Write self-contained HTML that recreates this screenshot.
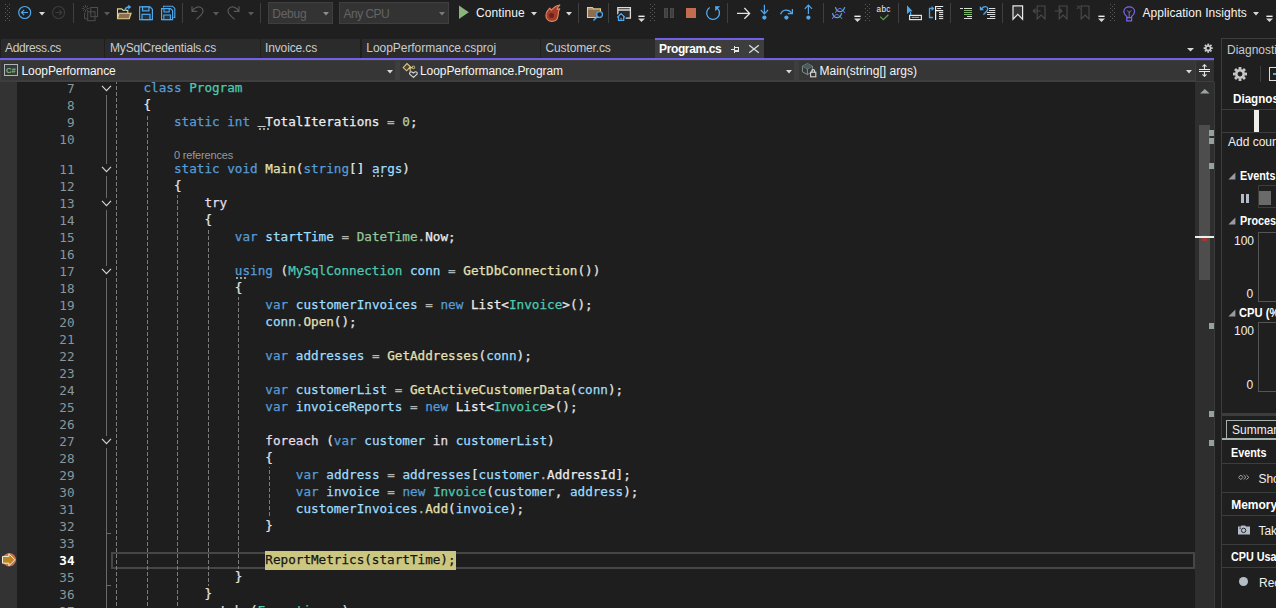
<!DOCTYPE html>
<html><head><meta charset="utf-8"><title>LoopPerformance - Program.cs</title>
<style>
html,body{margin:0;padding:0}
body{width:1276px;height:608px;overflow:hidden;background:#1f1f1f;position:relative;font-family:"Liberation Sans",sans-serif;font-size:12px;color:#e6e6e6}
i{font-style:normal}
.tt{position:absolute;white-space:pre;line-height:16px;color:#f4f4f4}
.combo{position:absolute;top:2px;height:22px;box-sizing:border-box;background:#333;border:1px solid #3f3f3f}
.combo span{position:absolute;top:2.5px;line-height:16px;color:#646464;white-space:pre}
.tab{position:absolute;top:39px;height:19px;background:#2b2b2b}
.tab span{position:absolute;top:0.5px;line-height:16px;color:#c8cdd0;white-space:pre}
.atab{position:absolute;left:655px;top:38px;width:109px;height:20px;background:#3d3d3d;border-top:2px solid #7160e8;box-sizing:border-box}
.atab span{position:absolute;left:4px;top:0.5px;line-height:16px;font-weight:700;color:#fff;white-space:pre}
#code{position:absolute;left:0;top:82px;width:1195px;height:526px;overflow:hidden;background:#1e1e1e}
.g{position:absolute;width:1px;background-image:linear-gradient(#7c7c7c 0 4px,transparent 4px 6px);background-size:1px 6px}
.ln{position:absolute;left:29px;width:45.5px;text-align:right;font:12.65px/17px "DejaVu Sans Mono","Liberation Mono",monospace;color:#87989e;white-space:pre}
.ln.cur{color:#fff;font-weight:700}
.cl{position:absolute;white-space:pre;font:12.65px/17px "DejaVu Sans Mono","Liberation Mono",monospace;color:#e4e4e4;height:17px;-webkit-text-stroke:0.25px}
.k{color:#569cd6}.t{color:#4ec9b0}.l{color:#9cdcfe}.m{color:#e4e0b4}.s{color:#92c89a}.o{color:#b4b4b4}.n{color:#b5cea8}.c{color:#e6dcea}.f{color:#ececec}
.h{color:#161616}.u{position:relative;top:-2px;color:#ececec}
#rp{position:absolute;left:1221px;top:38px;width:55px;height:570px;overflow:hidden;border-left:1px solid #3d3d3d;border-top:1px solid #3d3d3d;box-sizing:border-box;background:#1f1f1f}
#rp>*{margin-left:-1px;margin-top:-1px}
.rt{position:absolute;white-space:pre;line-height:14px}
</style></head>
<body>
<svg style="position:absolute;left:5px;top:4px" width="6" height="18" viewBox="0 0 6 18" ><g fill="#5a5a5a"><rect x="0" y="0" width="1" height="1"/><rect x="4" y="0" width="1" height="1"/><rect x="2" y="2" width="1" height="1"/><rect x="0" y="4" width="1" height="1"/><rect x="4" y="4" width="1" height="1"/><rect x="2" y="6" width="1" height="1"/><rect x="0" y="8" width="1" height="1"/><rect x="4" y="8" width="1" height="1"/><rect x="2" y="10" width="1" height="1"/><rect x="0" y="12" width="1" height="1"/><rect x="4" y="12" width="1" height="1"/><rect x="2" y="14" width="1" height="1"/><rect x="0" y="16" width="1" height="1"/><rect x="4" y="16" width="1" height="1"/></g></svg>
<svg style="position:absolute;left:17px;top:5px" width="16" height="16" viewBox="0 0 16 16" ><circle cx="7.7" cy="7.5" r="6" fill="none" stroke="#4ea8ee" stroke-width="1.2"/><path d="M11 7.5H4.6M7.2 4.8L4.5 7.5L7.2 10.2" fill="none" stroke="#4ea8ee" stroke-width="1.2"/></svg>
<svg style="position:absolute;left:39px;top:12px" width="7" height="4.5" viewBox="0 0 7 4.5" ><path d="M0 0H6L3.0 3.5Z" fill="#d8d8d8"/></svg>
<svg style="position:absolute;left:51px;top:5px" width="16" height="16" viewBox="0 0 16 16" ><circle cx="7.6" cy="7.5" r="6" fill="none" stroke="#3c3c3c" stroke-width="1.1"/><path d="M4.4 7.5H10.8M8.2 4.8L10.9 7.5L8.2 10.2" fill="none" stroke="#3c3c3c" stroke-width="1.1"/></svg>
<div style="position:absolute;left:73px;top:3px;width:1px;height:20px;background:#3f3f3f"></div>
<svg style="position:absolute;left:81px;top:4px" width="18" height="18" viewBox="0 0 18 18" ><g fill="none" stroke="#4e4e4e" stroke-width="1"><rect x="9.8" y="3.5" width="6.7" height="9.2"/><rect x="6.7" y="7.8" width="7.3" height="8.9"/><path d="M3.6 8.7V14.8H6.5"/><g stroke-width="0.9"><path d="M0 -1.3V-3.6" transform="translate(4.5 4.5) rotate(0)"/><path d="M0 -1.3V-3.6" transform="translate(4.5 4.5) rotate(45)"/><path d="M0 -1.3V-3.6" transform="translate(4.5 4.5) rotate(90)"/><path d="M0 -1.3V-3.6" transform="translate(4.5 4.5) rotate(135)"/><path d="M0 -1.3V-3.6" transform="translate(4.5 4.5) rotate(180)"/><path d="M0 -1.3V-3.6" transform="translate(4.5 4.5) rotate(225)"/><path d="M0 -1.3V-3.6" transform="translate(4.5 4.5) rotate(270)"/><path d="M0 -1.3V-3.6" transform="translate(4.5 4.5) rotate(315)"/></g></g></svg>
<svg style="position:absolute;left:104px;top:12px" width="7" height="4.5" viewBox="0 0 7 4.5" ><path d="M0 0H6L3.0 3.5Z" fill="#5a5a5a"/></svg>
<svg style="position:absolute;left:116px;top:4px" width="17" height="17" viewBox="0 0 17 17" ><path d="M1.5 14.6V4.9H5.7L7.2 6.4H11.8V9" fill="none" stroke="#e6d28c" stroke-width="1.1"/><path d="M1.5 14.8L3 9.2H15.1L13.2 14.8Z" fill="#8e6e52" stroke="#e6d28c" stroke-width="1.1"/><path d="M9.1 6.9C9.1 4.4 10.6 3.1 13 3.1" fill="none" stroke="#4ea8ee" stroke-width="1.5"/><path d="M12.2 0.7L15.3 3.1L12.2 5.6Z" fill="#4ea8ee"/></svg>
<svg style="position:absolute;left:138px;top:5px" width="16" height="16" viewBox="0 0 16 16" ><path d="M1.6 1.9H12L14.4 4.3V14.6H1.6Z" fill="none" stroke="#4ea8ee" stroke-width="1.2"/><rect x="4.5" y="1.9" width="6.5" height="4" fill="#22323f" stroke="#4ea8ee" stroke-width="1.2"/><rect x="4" y="9.3" width="8" height="5.3" fill="#22323f" stroke="#4ea8ee" stroke-width="1.2"/></svg>
<svg style="position:absolute;left:160px;top:5px" width="16" height="16" viewBox="0 0 16 16" ><path d="M3.5 2.5V1.2H12.6L14.8 3.4V12.5H13.4" fill="none" stroke="#4ea8ee" stroke-width="1.1"/><path d="M1.6 3.6H10.6L12.6 5.6V14.6H1.6Z" fill="none" stroke="#4ea8ee" stroke-width="1.2"/><rect x="4" y="3.6" width="5.2" height="3.4" fill="#22323f" stroke="#4ea8ee" stroke-width="1.1"/><rect x="3.8" y="10" width="6.6" height="4.6" fill="#22323f" stroke="#4ea8ee" stroke-width="1.1"/></svg>
<div style="position:absolute;left:182px;top:3px;width:1px;height:20px;background:#3f3f3f"></div>
<svg style="position:absolute;left:190px;top:4px" width="16" height="17" viewBox="0 0 16 17" ><path d="M2 2.2V7.4H7.2M2.2 7.2C4 3.4 9 1.4 12 4.4C14.6 7.2 12.4 10 6.4 15.4" fill="none" stroke="#5a5a5a" stroke-width="1.1"/></svg>
<svg style="position:absolute;left:213px;top:12px" width="7" height="4.5" viewBox="0 0 7 4.5" ><path d="M0 0H6L3.0 3.5Z" fill="#5a5a5a"/></svg>
<svg style="position:absolute;left:226px;top:4px" width="16" height="17" viewBox="0 0 16 17" ><path d="M13 2.2V7.4H7.8M12.8 7.2C11 3.4 6 1.4 3 4.4C0.4 7.2 2.6 10 8.6 15.4" fill="none" stroke="#5a5a5a" stroke-width="1.1"/></svg>
<svg style="position:absolute;left:248px;top:12px" width="7" height="4.5" viewBox="0 0 7 4.5" ><path d="M0 0H6L3.0 3.5Z" fill="#5a5a5a"/></svg>
<div style="position:absolute;left:260px;top:3px;width:1px;height:20px;background:#3f3f3f"></div>
<div class="combo" style="left:268px;width:65px"><span style="left:3.3px;letter-spacing:-0.27px">Debug</span></div>
<svg style="position:absolute;left:323px;top:12px" width="7" height="4.5" viewBox="0 0 7 4.5" ><path d="M0 0H6L3.0 3.5Z" fill="#8e8e8e"/></svg>
<div class="combo" style="left:339px;width:110px"><span style="left:3.6px;letter-spacing:-0.55px">Any CPU</span></div>
<svg style="position:absolute;left:439px;top:12px" width="7" height="4.5" viewBox="0 0 7 4.5" ><path d="M0 0H6L3.0 3.5Z" fill="#7a7a7a"/></svg>
<svg style="position:absolute;left:458px;top:5px" width="12" height="15" viewBox="0 0 12 15" ><path d="M1 0.6L10.8 7.3L1 14Z" fill="#8ab47c"/></svg>
<div class="tt" style="left:476px;top:5px;letter-spacing:0.09px">Continue</div>
<svg style="position:absolute;left:531px;top:12px" width="7" height="4.5" viewBox="0 0 7 4.5" ><path d="M0 0H6L3.0 3.5Z" fill="#d8d8d8"/></svg>
<svg style="position:absolute;left:545px;top:4px" width="16" height="19" viewBox="0 0 16 19" ><path d="M6.8 17.4C3.4 17.4 0.9 14.8 0.9 11.6C0.9 9 2 7 3.4 5.6L4.8 4.1L6.3 6.1C7.5 5 9 3.4 11 2.2C12.4 1.4 13.6 1.1 14.9 1C13.6 2 12.6 3.4 12.2 5.5L14.8 4.7C13.8 6.2 13.4 7.4 13.3 9C13.4 10 13.2 11 13 12C12.6 15 10.2 17.4 6.8 17.4Z" fill="#a03c2a" stroke="#e08a68" stroke-width="1.1" stroke-linejoin="round"/><circle cx="6.6" cy="11.5" r="2.5" fill="#6e2218"/></svg>
<svg style="position:absolute;left:566px;top:12px" width="7" height="4.5" viewBox="0 0 7 4.5" ><path d="M0 0H6L3.0 3.5Z" fill="#d8d8d8"/></svg>
<div style="position:absolute;left:578px;top:3px;width:1px;height:20px;background:#3f3f3f"></div>
<svg style="position:absolute;left:586px;top:6px" width="17" height="16" viewBox="0 0 17 16" ><path d="M1.5 1.5H6.4l1.2 1.4H14.5V11.5H1.5Z" fill="#8e6e52" stroke="#e0cc90" stroke-width="1.1"/><path d="M1.5 3H7.5" stroke="#e0cc90" stroke-width="0.8"/><circle cx="13.6" cy="8.5" r="2.9" fill="#1f1f1f" stroke="#4ea8ee" stroke-width="1.3"/><path d="M11.6 10.6L7.4 14.6" stroke="#4ea8ee" stroke-width="1.4"/></svg>
<div style="position:absolute;left:608px;top:3px;width:1px;height:20px;background:#3f3f3f"></div>
<svg style="position:absolute;left:616px;top:6px" width="16" height="16" viewBox="0 0 16 16" ><rect x="1.7" y="1.5" width="12.8" height="10.8" fill="#2a2a2a"/><path d="M1.8 8.4V1.6H14.4V12.2H9.6M1.8 4H14.4" fill="none" stroke="#dcdcdc" stroke-width="1.3"/><path d="M0.8 11.6L5.1 7.4L9.4 11.6" fill="#1f1f1f" stroke="#1f1f1f" stroke-width="3"/><path d="M2.5 11V14.5H7.7V11Z" fill="#1f1f1f" stroke="#1f1f1f" stroke-width="2.4"/><path d="M1.2 11.4L5.1 7.7L9 11.4M2.5 10.6V14.4H7.7V10.6" fill="none" stroke="#4ea8ee" stroke-width="1.3"/><rect x="4.4" y="12" width="1.4" height="1.6" fill="#4ea8ee"/></svg>
<svg style="position:absolute;left:638px;top:15.4px" width="8" height="8" viewBox="0 0 8 8" ><rect x="0.4" y="0.6" width="6.2" height="1.4" fill="#f0f0f0"/><path d="M0 3.4H7L3.5 6.9Z" fill="#d8d8d8"/></svg>
<svg style="position:absolute;left:650px;top:4px" width="6" height="18" viewBox="0 0 6 18" ><g fill="#5a5a5a"><rect x="0" y="0" width="1" height="1"/><rect x="4" y="0" width="1" height="1"/><rect x="2" y="2" width="1" height="1"/><rect x="0" y="4" width="1" height="1"/><rect x="4" y="4" width="1" height="1"/><rect x="2" y="6" width="1" height="1"/><rect x="0" y="8" width="1" height="1"/><rect x="4" y="8" width="1" height="1"/><rect x="2" y="10" width="1" height="1"/><rect x="0" y="12" width="1" height="1"/><rect x="4" y="12" width="1" height="1"/><rect x="2" y="14" width="1" height="1"/><rect x="0" y="16" width="1" height="1"/><rect x="4" y="16" width="1" height="1"/></g></svg>
<div style="position:absolute;left:664px;top:8px;width:4px;height:10px;background:#3f3f3f;border:1px solid #4a4a4a;box-sizing:border-box"></div><div style="position:absolute;left:670px;top:8px;width:4px;height:10px;background:#3f3f3f;border:1px solid #4a4a4a;box-sizing:border-box"></div>
<div style="position:absolute;left:686px;top:8px;width:10px;height:10px;background:#c46c50"></div>
<svg style="position:absolute;left:705px;top:4px" width="17" height="17" viewBox="0 0 17 17" ><path d="M4.8 3.5A6.4 6.4 0 1 0 13.7 5.9L10.6 2.8" fill="none" stroke="#4ea8ee" stroke-width="1.3"/><path d="M10.2 7.2V2.3H15.2Z" fill="#4ea8ee"/></svg>
<div style="position:absolute;left:727px;top:3px;width:1px;height:20px;background:#3f3f3f"></div>
<svg style="position:absolute;left:736px;top:7px" width="15" height="13" viewBox="0 0 15 13" ><path d="M1 6.4H13.4M8.4 1L13.6 6.4L8.4 11.8" fill="none" stroke="#e4e4e4" stroke-width="1.3"/></svg>
<svg style="position:absolute;left:759px;top:4px" width="11" height="18" viewBox="0 0 11 18" ><path d="M5.4 0.8V9.6M1.8 6L5.4 9.8L9 6" fill="none" stroke="#4ea8ee" stroke-width="1.2"/><circle cx="5.4" cy="13.6" r="2.1" fill="#4ea8ee"/></svg>
<svg style="position:absolute;left:779px;top:5px" width="16" height="16" viewBox="0 0 16 16" ><path d="M1.6 9.2C3.4 4.2 9.6 3.6 12.6 8" fill="none" stroke="#4ea8ee" stroke-width="1.3"/><path d="M13.4 4V8.6H8.8" fill="none" stroke="#4ea8ee" stroke-width="1.3"/><circle cx="7.4" cy="12.6" r="2.1" fill="#4ea8ee"/></svg>
<svg style="position:absolute;left:803px;top:4px" width="11" height="18" viewBox="0 0 11 18" ><path d="M5.4 10V1.2M1.8 4.8L5.4 1L9 4.8" fill="none" stroke="#4ea8ee" stroke-width="1.2"/><circle cx="5.4" cy="13.6" r="2.1" fill="#4ea8ee"/></svg>
<div style="position:absolute;left:823px;top:3px;width:1px;height:20px;background:#3f3f3f"></div>
<svg style="position:absolute;left:830px;top:5px" width="17" height="16" viewBox="0 0 17 16" ><path d="M11.0 3.5L14.5 7.300000000000001" fill="none" stroke="#8a8a8a" stroke-width="0.9"/><path d="M5.4 2.1C6.9 8.1 13.2 8.1 14.700000000000001 2.1" fill="none" stroke="#4ea8ee" stroke-width="1.3"/><path d="M5.5 7.300000000000001L8.9 3.5" fill="none" stroke="#9a948c" stroke-width="0.9"/><path d="M8.8 3.5H11.100000000000001" stroke="#7a5fe0" stroke-width="1.1"/><rect x="5.0" y="6.800000000000001" width="1.1" height="1.2" fill="#7a5fe0"/><rect x="14.0" y="6.800000000000001" width="1.1" height="1.2" fill="#7a5fe0"/><path d="M8.0 9.5L11.5 13.3" fill="none" stroke="#8a8a8a" stroke-width="0.9"/><path d="M2.4 8.1C3.9 14.1 10.2 14.1 11.700000000000001 8.1" fill="none" stroke="#4ea8ee" stroke-width="1.3"/><path d="M2.5 13.3L5.9 9.5" fill="none" stroke="#9a948c" stroke-width="0.9"/><path d="M5.8 9.5H8.1" stroke="#7a5fe0" stroke-width="1.1"/><rect x="2.0" y="12.8" width="1.1" height="1.2" fill="#7a5fe0"/><rect x="11.0" y="12.8" width="1.1" height="1.2" fill="#7a5fe0"/></svg>
<svg style="position:absolute;left:854px;top:15.4px" width="8" height="8" viewBox="0 0 8 8" ><rect x="0.4" y="0.6" width="6.2" height="1.4" fill="#f0f0f0"/><path d="M0 3.4H7L3.5 6.9Z" fill="#d8d8d8"/></svg>
<svg style="position:absolute;left:865px;top:4px" width="6" height="18" viewBox="0 0 6 18" ><g fill="#5a5a5a"><rect x="0" y="0" width="1" height="1"/><rect x="4" y="0" width="1" height="1"/><rect x="2" y="2" width="1" height="1"/><rect x="0" y="4" width="1" height="1"/><rect x="4" y="4" width="1" height="1"/><rect x="2" y="6" width="1" height="1"/><rect x="0" y="8" width="1" height="1"/><rect x="4" y="8" width="1" height="1"/><rect x="2" y="10" width="1" height="1"/><rect x="0" y="12" width="1" height="1"/><rect x="4" y="12" width="1" height="1"/><rect x="2" y="14" width="1" height="1"/><rect x="0" y="16" width="1" height="1"/><rect x="4" y="16" width="1" height="1"/></g></svg>
<div style="position:absolute;left:876.6px;top:4.5px;font:400 8.2px/10px 'Liberation Sans',sans-serif;color:#f0f0f0;letter-spacing:0.3px">abc</div>
<svg style="position:absolute;left:879px;top:14px" width="11" height="7" viewBox="0 0 11 7" ><path d="M1.2 2.6L4.3 5.6L9.4 0.8" fill="none" stroke="#5f9d4c" stroke-width="1.3"/></svg>
<div style="position:absolute;left:898px;top:3px;width:1px;height:20px;background:#3f3f3f"></div>
<svg style="position:absolute;left:906px;top:4px" width="17" height="17" viewBox="0 0 17 17" ><path d="M1 1.2L6.6 7.2L4 7.6L1 10Z" fill="#4ea8ee"/><path d="M4.6 8V12" stroke="#4ea8ee" stroke-width="1.2"/><rect x="3.6" y="11.4" width="11.8" height="4.2" fill="none" stroke="#e4e4e4" stroke-width="1.2"/><rect x="5.6" y="12.8" width="7.6" height="1.2" fill="#9a9a9a"/></svg>
<svg style="position:absolute;left:928px;top:5px" width="16" height="16" viewBox="0 0 16 16" ><path d="M4.2 3.4H1.5V12.5H4.9" fill="none" stroke="#4ea8ee" stroke-width="1.3"/><path d="M3.6 0.9L6.3 3.4L3.6 5.9Z" fill="#4ea8ee"/><path d="M7.6 15V1.5H15.2M7.6 5.6H15.2" fill="none" stroke="#ececec" stroke-width="1.2"/><rect x="9.2" y="3" width="4" height="1" fill="#d8d8d8"/><g fill="#ececec"><rect x="11" y="7.1" width="4.2" height="1"/><rect x="11" y="9.1" width="4.2" height="1"/><rect x="11" y="11.1" width="4.2" height="1"/><rect x="11" y="13.1" width="4.2" height="1"/></g></svg>
<div style="position:absolute;left:950px;top:3px;width:1px;height:20px;background:#3f3f3f"></div>
<svg style="position:absolute;left:959px;top:7px" width="14" height="13" viewBox="0 0 14 13" ><rect x="1" y="1" width="3" height="1" fill="#dcdcdc"/><rect x="5" y="1" width="8" height="1" fill="#dcdcdc"/><rect x="5" y="3" width="8" height="1" fill="#7eb86a"/><rect x="5" y="5" width="8" height="1" fill="#7eb86a"/><rect x="5" y="7" width="8" height="1" fill="#7eb86a"/><rect x="8" y="9" width="5" height="1" fill="#dcdcdc"/><rect x="5" y="11" width="8" height="1" fill="#dcdcdc"/></svg>
<svg style="position:absolute;left:979px;top:5px" width="17" height="16" viewBox="0 0 17 16" ><path d="M0.8 1V5.2H5Z" fill="#4ea8ee"/><path d="M2.6 3.8C4.6 0.8 8.4 1.2 8.8 3.6C9 5.6 6.4 7.4 4.4 9.6" fill="none" stroke="#4ea8ee" stroke-width="1.4"/><rect x="10" y="3" width="6.300000000000001" height="1" fill="#dcdcdc"/><rect x="10" y="5" width="6.300000000000001" height="1" fill="#dcdcdc"/><rect x="8" y="7" width="8.3" height="1" fill="#dcdcdc"/><rect x="8" y="9" width="8.3" height="1" fill="#dcdcdc"/><rect x="11" y="11" width="5.300000000000001" height="1" fill="#dcdcdc"/><rect x="8" y="13" width="8.3" height="1" fill="#dcdcdc"/></svg>
<div style="position:absolute;left:1002px;top:3px;width:1px;height:20px;background:#3f3f3f"></div>
<svg style="position:absolute;left:1012px;top:5px" width="12" height="16" viewBox="0 0 12 16" ><path d="M1 0.9H10.6V14.2L5.8 9.4L1 14.2Z" fill="#333" stroke="#e8e8e8" stroke-width="1.2"/></svg>
<svg style="position:absolute;left:1032px;top:5px" width="15" height="16" viewBox="0 0 15 16" ><path d="M5.2 1H13V14L9.1 10L5.2 14Z" fill="none" stroke="#4b4b4b" stroke-width="1.1"/><path d="M8.6 6H1.2M3.6 3.6L1.2 6L3.6 8.4" fill="none" stroke="#4b4b4b" stroke-width="1.1"/></svg>
<svg style="position:absolute;left:1054px;top:5px" width="15" height="16" viewBox="0 0 15 16" ><path d="M5.2 1H13V14L9.1 10L5.2 14Z" fill="none" stroke="#4b4b4b" stroke-width="1.1"/><path d="M0.6 6H8M5.6 3.6L8 6L5.6 8.4" fill="none" stroke="#4b4b4b" stroke-width="1.1"/></svg>
<svg style="position:absolute;left:1076px;top:5px" width="15" height="16" viewBox="0 0 15 16" ><path d="M5.2 1H13V14L9.1 10L5.2 14Z" fill="none" stroke="#4b4b4b" stroke-width="1.1"/><path d="M0.8 0.4L4.4 4M4.4 0.4L0.8 4" fill="none" stroke="#4b4b4b" stroke-width="1"/></svg>
<svg style="position:absolute;left:1098px;top:15.4px" width="8" height="8" viewBox="0 0 8 8" ><rect x="0.4" y="0.6" width="6.2" height="1.4" fill="#f0f0f0"/><path d="M0 3.4H7L3.5 6.9Z" fill="#d8d8d8"/></svg>
<svg style="position:absolute;left:1110px;top:4px" width="6" height="18" viewBox="0 0 6 18" ><g fill="#5a5a5a"><rect x="0" y="0" width="1" height="1"/><rect x="4" y="0" width="1" height="1"/><rect x="2" y="2" width="1" height="1"/><rect x="0" y="4" width="1" height="1"/><rect x="4" y="4" width="1" height="1"/><rect x="2" y="6" width="1" height="1"/><rect x="0" y="8" width="1" height="1"/><rect x="4" y="8" width="1" height="1"/><rect x="2" y="10" width="1" height="1"/><rect x="0" y="12" width="1" height="1"/><rect x="4" y="12" width="1" height="1"/><rect x="2" y="14" width="1" height="1"/><rect x="0" y="16" width="1" height="1"/><rect x="4" y="16" width="1" height="1"/></g></svg>
<svg style="position:absolute;left:1123px;top:5.7px" width="13" height="17" viewBox="0 0 13 17" ><path d="M3.8 10.4C1.6 8.8 0.8 7.2 0.8 5.6C0.8 2.8 3.2 0.8 6.2 0.8S11.6 2.8 11.6 5.6C11.6 7.2 10.8 8.8 8.6 10.4V11.6H3.8ZM3.8 11.6V14.8H8.6V11.6" fill="none" stroke="#7a66ea" stroke-width="1.2"/><path d="M6.2 11V5.4M4 4.4L6.2 6.6L8.4 4.4" fill="none" stroke="#7a66ea" stroke-width="1"/></svg>
<div class="tt" style="left:1142.5px;top:5px;letter-spacing:0.05px">Application Insights</div>
<svg style="position:absolute;left:1253px;top:12px" width="7" height="4.5" viewBox="0 0 7 4.5" ><path d="M0 0H6L3.0 3.5Z" fill="#d8d8d8"/></svg>
<svg style="position:absolute;left:1265.5px;top:15.4px" width="8" height="8" viewBox="0 0 8 8" ><rect x="0.4" y="0.6" width="6.2" height="1.4" fill="#f0f0f0"/><path d="M0 3.4H7L3.5 6.9Z" fill="#d8d8d8"/></svg>
<div class="tab" style="left:1px;width:103px"><span style="left:4px;letter-spacing:-0.336px">Address.cs</span></div>
<div class="tab" style="left:105px;width:154.5px"><span style="left:5px;letter-spacing:-0.178px">MySqlCredentials.cs</span></div>
<div class="tab" style="left:261px;width:99px"><span style="left:4px;letter-spacing:-0.136px">Invoice.cs</span></div>
<div class="tab" style="left:361.5px;width:178px"><span style="left:4.800000000000011px;letter-spacing:-0.047px">LoopPerformance.csproj</span></div>
<div class="tab" style="left:540.5px;width:114px"><span style="left:5.0px;letter-spacing:-0.135px">Customer.cs</span></div>
<div class="atab"><span style="letter-spacing:-0.37px">Program.cs</span></div>
<svg style="position:absolute;left:730px;top:45px" width="10" height="9" fill="#e4e8e4"><rect x="1" y="4" width="3" height="1"/><rect x="4" y="1" width="1" height="7"/><rect x="5" y="2" width="4" height="1"/><rect x="8" y="2" width="1" height="5"/><rect x="5" y="5" width="4" height="2"/></svg>
<svg style="position:absolute;left:748px;top:44px" width="12" height="10" viewBox="0 0 12 10" ><path d="M1.2 1.2L10.8 8.8M10.8 1.2L1.2 8.8" fill="none" stroke="#d0dcd4" stroke-width="1.4"/></svg>
<svg style="position:absolute;left:1187px;top:48.4px" width="8" height="4.6" viewBox="0 0 8 4.6" ><path d="M0 0H7L3.5 3.6Z" fill="#d8d8d8"/></svg>
<svg style="position:absolute;left:1203px;top:43px" width="10.4" height="10.4" viewBox="0 0 16 16" ><g transform="translate(8 8)"><circle r="3.7" fill="none" stroke="#d0d0d0" stroke-width="2.6"/><g stroke="#d0d0d0" stroke-width="2.8"><path d="M0 -4.6V-7" transform="rotate(0)"/><path d="M0 -4.6V-7" transform="rotate(45)"/><path d="M0 -4.6V-7" transform="rotate(90)"/><path d="M0 -4.6V-7" transform="rotate(135)"/><path d="M0 -4.6V-7" transform="rotate(180)"/><path d="M0 -4.6V-7" transform="rotate(225)"/><path d="M0 -4.6V-7" transform="rotate(270)"/><path d="M0 -4.6V-7" transform="rotate(315)"/></g></g></svg>
<div style="position:absolute;left:0;top:58px;width:1214px;height:2px;background:#7160e8"></div>
<div style="position:absolute;left:0;top:60px;width:1214px;height:22px;background:#3e3e3e"></div>
<div style="position:absolute;left:1px;top:61px;width:394px;height:19px;background:#363636"></div>
<div style="position:absolute;left:400px;top:61px;width:393.5px;height:19px;background:#363636"></div>
<div style="position:absolute;left:799px;top:61px;width:396px;height:19px;background:#363636"></div>
<div style="position:absolute;left:1196px;top:61px;width:18px;height:19.5px;background:#303030"></div>
<div style="position:absolute;left:4px;top:64px;width:14px;height:12px;box-sizing:border-box;border:1px solid #aeb6ba;background:#3a3a3a"></div><div style="position:absolute;left:6px;top:66px;font:700 7.6px 'Liberation Sans',sans-serif;color:#7cba72;letter-spacing:0.1px;line-height:10px">C<i style="color:#7cba9c">#</i></div>
<div class="tt" style="left:21.5px;top:63px;letter-spacing:-0.08px">LoopPerformance</div>
<svg style="position:absolute;left:387px;top:69.8px" width="7" height="4.4" viewBox="0 0 7 4.4" ><path d="M0 0H6L3.0 3.4Z" fill="#d8d8d8"/></svg>
<svg style="position:absolute;left:402px;top:62px" width="17" height="17" viewBox="0 0 17 17" ><path d="M1.2 5.6L5 1.6L8.4 4.8L4.6 8.8Z" fill="#4a4434" stroke="#dcc88c" stroke-width="1.1"/><path d="M6.6 6.6L8.2 5.6H10.4M8.2 5.6V9.8" fill="none" stroke="#dcc88c" stroke-width="1.1"/><circle cx="11.4" cy="5.4" r="1.3" fill="none" stroke="#dcc88c" stroke-width="1"/><path d="M11.4 15.4L7.8 12.2C7 10.8 8.2 9.6 9.6 9.8L11.4 11L13.2 9.8C14.6 9.6 15.8 10.8 15 12.2Z" fill="#363636" stroke="#cfd6d2" stroke-width="1.2"/></svg>
<div class="tt" style="left:420px;top:63px;letter-spacing:-0.08px">LoopPerformance.Program</div>
<svg style="position:absolute;left:786px;top:69.8px" width="7" height="4.4" viewBox="0 0 7 4.4" ><path d="M0 0H6L3.0 3.4Z" fill="#d8d8d8"/></svg>
<svg style="position:absolute;left:801px;top:62px" width="17" height="17" viewBox="0 0 17 17" ><path d="M1.4 4.2L6.4 1.6L11.4 4.2V9.8L6.4 12.6L1.4 9.8Z M1.4 4.2L6.4 6.8L11.4 4.2M6.4 6.8V12.6" fill="none" stroke="#7a9494" stroke-width="1"/><path d="M1.4 4.2L6.4 1.6L11.4 4.2L6.4 6.8Z" fill="#4a5a5a"/><rect x="9.6" y="10.2" width="5.2" height="4.6" fill="#363636" stroke="#d8d8d8" stroke-width="1.1"/><path d="M10.8 10.2V8.8C10.8 7.2 13.6 7.2 13.6 8.8V10.2" fill="none" stroke="#d8d8d8" stroke-width="1.1"/></svg>
<div class="tt" style="left:819.5px;top:63px;letter-spacing:0.05px">Main(string[] args)</div>
<svg style="position:absolute;left:1186px;top:69.8px" width="7" height="4.4" viewBox="0 0 7 4.4" ><path d="M0 0H6L3.0 3.4Z" fill="#d8d8d8"/></svg>
<svg style="position:absolute;left:1199px;top:64px" width="12" height="14" viewBox="0 0 12 14" ><rect x="0" y="5" width="11" height="1" fill="#e8ece8"/><rect x="0" y="7" width="11" height="1" fill="#e8ece8"/><path d="M5.5 0.6V5M5.5 8V12.4M3.5 2.7L5.5 0.7L7.5 2.7M3.5 10.3L5.5 12.3L7.5 10.3" fill="none" stroke="#dce4e0" stroke-width="1.1"/></svg>
<div id="code">
<div style="position:absolute;left:0;top:0;width:17px;height:526px;background:#333"></div>
<div style="position:absolute;left:111px;top:470px;width:1084px;height:17px;box-sizing:border-box;border:2px solid #464646;border-right:0"></div>
<div style="position:absolute;left:1193px;top:470px;width:2px;height:17px;background:#464646"></div>
<div class="g" style="left:116px;top:0px;height:526px;background-position:0 -2px"></div>
<div class="g" style="left:147px;top:32px;height:494px;background-position:0 -4px"></div>
<div class="g" style="left:177px;top:113px;height:413px;background-position:0 -1px"></div>
<div class="g" style="left:208px;top:147px;height:357px;background-position:0 -5px"></div>
<div class="g" style="left:238px;top:215px;height:272px;background-position:0 -1px"></div>
<div class="g" style="left:269px;top:385px;height:51px;background-position:0 -3px"></div>
<div style="position:absolute;left:265px;top:469px;width:191.3px;height:19px;background:#cbc780"></div>
<div style="position:absolute;left:106px;top:13px;width:1px;height:69px;background:#6a6a6a"></div>
<div style="position:absolute;left:106px;top:94px;width:1px;height:22px;background:#6a6a6a"></div>
<div style="position:absolute;left:106px;top:128px;width:1px;height:56px;background:#6a6a6a"></div>
<div style="position:absolute;left:106px;top:196px;width:1px;height:158px;background:#6a6a6a"></div>
<div style="position:absolute;left:106px;top:366px;width:1px;height:160px;background:#6a6a6a"></div>
<svg style="position:absolute;left:101px;top:3px" width="11" height="7" viewBox="0 0 11 7" ><path d="M1 0.8L5.5 5.6L10 0.8" fill="none" stroke="#d4dadc" stroke-width="1.1"/></svg>
<svg style="position:absolute;left:101px;top:84px" width="11" height="7" viewBox="0 0 11 7" ><path d="M1 0.8L5.5 5.6L10 0.8" fill="none" stroke="#d4dadc" stroke-width="1.1"/></svg>
<svg style="position:absolute;left:101px;top:118px" width="11" height="7" viewBox="0 0 11 7" ><path d="M1 0.8L5.5 5.6L10 0.8" fill="none" stroke="#d4dadc" stroke-width="1.1"/></svg>
<svg style="position:absolute;left:101px;top:186px" width="11" height="7" viewBox="0 0 11 7" ><path d="M1 0.8L5.5 5.6L10 0.8" fill="none" stroke="#d4dadc" stroke-width="1.1"/></svg>
<svg style="position:absolute;left:101px;top:356px" width="11" height="7" viewBox="0 0 11 7" ><path d="M1 0.8L5.5 5.6L10 0.8" fill="none" stroke="#d4dadc" stroke-width="1.1"/></svg>
<div style="position:absolute;left:106px;top:451px;width:5px;height:1px;background:#6a6a6a"></div>
<div style="position:absolute;left:106px;top:503px;width:5px;height:1px;background:#6a6a6a"></div>
<svg style="position:absolute;left:2px;top:470px" width="15" height="16" viewBox="0 0 15 16" ><circle cx="7.3" cy="7.8" r="6.8" fill="#c87050"/><path d="M0.5 4.4H6.9V1.8L12.9 7.8L6.9 13.8V11.2H0.5Z" fill="#bc861e" stroke="#f4f0e6" stroke-width="1"/></svg>
<div class="ln" style="top:-2px">7</div>
<div class="cl" style="top:-3px;left:143.47px"><i class="k">class</i> <i class="t">Program</i></div>
<div class="ln" style="top:15px">8</div>
<div class="cl" style="top:14px;left:143.47px">{</div>
<div class="ln" style="top:32px">9</div>
<div class="cl" style="top:31px;left:173.94px"><i class="k">static</i> <i class="k">int</i> <i class="u">_</i><i class="f">TotalIterations</i> <i class="o">=</i> <i class="n">0</i>;</div>
<div class="ln" style="top:49px">10</div>
<div class="ln" style="top:79px">11</div>
<div class="cl" style="top:78px;left:173.94px"><i class="k">static</i> <i class="k">void</i> <i class="m">Main</i>(<i class="k">string</i>[] <i class="l">args</i>)</div>
<div class="ln" style="top:96px">12</div>
<div class="cl" style="top:95px;left:173.94px">{</div>
<div class="ln" style="top:113px">13</div>
<div class="cl" style="top:112px;left:204.40px"><i class="c">try</i></div>
<div class="ln" style="top:130px">14</div>
<div class="cl" style="top:129px;left:204.40px">{</div>
<div class="ln" style="top:147px">15</div>
<div class="cl" style="top:146px;left:234.87px"><i class="k">var</i> <i class="l">startTime</i> <i class="o">=</i> <i class="s">DateTime</i><i class="o">.</i><i class="f">Now</i>;</div>
<div class="ln" style="top:164px">16</div>
<div class="ln" style="top:181px">17</div>
<div class="cl" style="top:180px;left:234.87px"><i class="k">using</i> (<i class="t">MySqlConnection</i> <i class="l">conn</i> <i class="o">=</i> <i class="m">GetDbConnection</i>())</div>
<div class="ln" style="top:198px">18</div>
<div class="cl" style="top:197px;left:234.87px">{</div>
<div class="ln" style="top:215px">19</div>
<div class="cl" style="top:214px;left:265.34px"><i class="k">var</i> <i class="l">customerInvoices</i> <i class="o">=</i> <i class="k">new</i> <i class="f">List</i>&lt;<i class="t">Invoice</i>&gt;();</div>
<div class="ln" style="top:232px">20</div>
<div class="cl" style="top:231px;left:265.34px"><i class="l">conn</i><i class="o">.</i><i class="m">Open</i>();</div>
<div class="ln" style="top:249px">21</div>
<div class="ln" style="top:266px">22</div>
<div class="cl" style="top:265px;left:265.34px"><i class="k">var</i> <i class="l">addresses</i> <i class="o">=</i> <i class="m">GetAddresses</i>(<i class="l">conn</i>);</div>
<div class="ln" style="top:283px">23</div>
<div class="ln" style="top:300px">24</div>
<div class="cl" style="top:299px;left:265.34px"><i class="k">var</i> <i class="l">customerList</i> <i class="o">=</i> <i class="m">GetActiveCustomerData</i>(<i class="l">conn</i>);</div>
<div class="ln" style="top:317px">25</div>
<div class="cl" style="top:316px;left:265.34px"><i class="k">var</i> <i class="l">invoiceReports</i> <i class="o">=</i> <i class="k">new</i> <i class="f">List</i>&lt;<i class="t">Invoice</i>&gt;();</div>
<div class="ln" style="top:334px">26</div>
<div class="ln" style="top:351px">27</div>
<div class="cl" style="top:350px;left:265.34px"><i class="c">foreach</i> (<i class="k">var</i> <i class="l">customer</i> <i class="c">in</i> <i class="l">customerList</i>)</div>
<div class="ln" style="top:368px">28</div>
<div class="cl" style="top:367px;left:265.34px">{</div>
<div class="ln" style="top:385px">29</div>
<div class="cl" style="top:384px;left:295.81px"><i class="k">var</i> <i class="l">address</i> <i class="o">=</i> <i class="l">addresses</i>[<i class="l">customer</i><i class="o">.</i><i class="f">AddressId</i>];</div>
<div class="ln" style="top:402px">30</div>
<div class="cl" style="top:401px;left:295.81px"><i class="k">var</i> <i class="l">invoice</i> <i class="o">=</i> <i class="k">new</i> <i class="t">Invoice</i>(<i class="l">customer</i>, <i class="l">address</i>);</div>
<div class="ln" style="top:419px">31</div>
<div class="cl" style="top:418px;left:295.81px"><i class="l">customerInvoices</i><i class="o">.</i><i class="m">Add</i>(<i class="l">invoice</i>);</div>
<div class="ln" style="top:436px">32</div>
<div class="cl" style="top:435px;left:265.34px">}</div>
<div class="ln" style="top:453px">33</div>
<div class="ln cur" style="top:470px">34</div>
<div class="cl" style="top:469px;left:265.34px"><i class="h">ReportMetrics(startTime);</i></div>
<div class="ln" style="top:487px">35</div>
<div class="cl" style="top:486px;left:234.87px">}</div>
<div class="ln" style="top:504px">36</div>
<div class="cl" style="top:503px;left:204.40px">}</div>
<div class="ln" style="top:521px">37</div>
<div class="cl" style="top:520px;left:204.40px"><i class="c">catch</i> (<i class="t">Exception</i> <i class="l">e</i>)</div>
<div style="position:absolute;left:174px;top:67px;font:11px 'Liberation Sans',sans-serif;color:#999;letter-spacing:-0.18px;line-height:13px">0 references</div>
<svg style="position:absolute;left:259px;top:46px" width="10" height="2" fill="#9aa296"><rect x="0" y="0" width="2" height="2"/><rect x="4" y="0" width="2" height="2"/><rect x="8" y="0" width="2" height="2"/></svg>
<svg style="position:absolute;left:373px;top:93px" width="10" height="2" fill="#9aa296"><rect x="0" y="0" width="2" height="2"/><rect x="4" y="0" width="2" height="2"/><rect x="8" y="0" width="2" height="2"/></svg>
<svg style="position:absolute;left:236px;top:195px" width="10" height="2" fill="#9aa296"><rect x="0" y="0" width="2" height="2"/><rect x="4" y="0" width="2" height="2"/><rect x="8" y="0" width="2" height="2"/></svg>
</div>
<div style="position:absolute;left:1195px;top:82px;width:19px;height:526px;background:#2e2e2e"></div>
<div style="position:absolute;left:1214px;top:82px;width:1px;height:526px;background:#3a3a3a"></div>
<div style="position:absolute;left:1199px;top:125px;width:11px;height:155px;background:#4d4d4d"></div>
<svg style="position:absolute;left:1200px;top:88.5px" width="10" height="5" viewBox="0 0 10 5" ><path d="M0 4.6L4.8 0L9.6 4.6Z" fill="#9aa49c"/></svg>
<div style="position:absolute;left:1209px;top:130px;width:5px;height:6px;background:#93a39b"></div>
<div style="position:absolute;left:1209px;top:138px;width:5px;height:6px;background:#93a39b"></div>
<div style="position:absolute;left:1209px;top:163px;width:5px;height:6px;background:#93a39b"></div>
<div style="position:absolute;left:1209px;top:323px;width:5px;height:6px;background:#93a39b"></div>
<div style="position:absolute;left:1209px;top:411px;width:5px;height:6px;background:#93a39b"></div>
<div style="position:absolute;left:1209px;top:440px;width:5px;height:6px;background:#93a39b"></div>
<div style="position:absolute;left:1202px;top:235px;width:5px;height:6px;background:#a03a30"></div>
<div style="position:absolute;left:1195px;top:236px;width:19px;height:2px;background:#eee"></div>
<div id="rp">
<div class="rt" style="left:6px;top:5px;font-weight:400;color:#c4ccd0;letter-spacing:0px;font-size:12px">Diagnostic Tools</div>
<svg style="position:absolute;left:11px;top:28px" width="16" height="16" viewBox="0 0 16 16" ><g transform="translate(8 8)"><circle r="3.7" fill="none" stroke="#c8c8c8" stroke-width="2.6"/><g stroke="#c8c8c8" stroke-width="2.8"><path d="M0 -4.6V-7" transform="rotate(0)"/><path d="M0 -4.6V-7" transform="rotate(45)"/><path d="M0 -4.6V-7" transform="rotate(90)"/><path d="M0 -4.6V-7" transform="rotate(135)"/><path d="M0 -4.6V-7" transform="rotate(180)"/><path d="M0 -4.6V-7" transform="rotate(225)"/><path d="M0 -4.6V-7" transform="rotate(270)"/><path d="M0 -4.6V-7" transform="rotate(315)"/></g></g></svg>
<div style="position:absolute;left:39px;top:28px;width:1px;height:16px;background:#3d3d3d"></div>
<div style="position:absolute;left:48px;top:29px;width:14px;height:14px;box-sizing:border-box;border:1px solid #dcdcdc"></div><div style="position:absolute;left:52px;top:35px;width:8px;height:2px;background:#4ea8ee"></div>
<div class="rt" style="left:11.5px;top:54px;font-weight:700;transform:scaleX(0.97);transform-origin:0 0;color:#fff;letter-spacing:0px;font-size:12px">Diagnostics session</div>
<div style="position:absolute;left:1px;top:71px;width:60px;height:1px;background:#3d3d3d"></div>
<div style="position:absolute;left:1px;top:94px;width:60px;height:1px;background:#3d3d3d"></div>
<div style="position:absolute;left:33px;top:72px;width:5px;height:22px;background:#f0f0ea"></div>
<div class="rt" style="left:7px;top:96.5px;font-weight:400;color:#f0f0f0;letter-spacing:0px;font-size:12px">Add counter</div>
<svg style="position:absolute;left:7px;top:134px" width="8" height="8" viewBox="0 0 8 8" ><path d="M7.4 0.4V7.4H0.4Z" fill="#9a9aa0"/></svg>
<div class="rt" style="left:18.5px;top:130.7px;font-weight:700;transform:scaleX(0.9);transform-origin:0 0;color:#fff;letter-spacing:0px;font-size:12px">Events</div>
<div style="position:absolute;left:20px;top:156px;width:3px;height:9px;background:#b4bccc"></div><div style="position:absolute;left:25px;top:156px;width:3px;height:9px;background:#b4bccc"></div>
<div style="position:absolute;left:37px;top:147px;width:30px;height:23px;box-sizing:border-box;border:1px solid #3d3d3d"></div>
<div style="position:absolute;left:38px;top:153px;width:12px;height:14px;background:#6a6a6a"></div>
<svg style="position:absolute;left:7px;top:179px" width="8" height="8" viewBox="0 0 8 8" ><path d="M7.4 0.4V7.4H0.4Z" fill="#9a9aa0"/></svg>
<div class="rt" style="left:18.5px;top:175.7px;font-weight:700;transform:scaleX(0.9);transform-origin:0 0;color:#fff;letter-spacing:0px;font-size:12px">Process Memory</div>
<div style="position:absolute;left:37px;top:194px;width:30px;height:70px;box-sizing:border-box;border:1px solid #555"></div>
<div class="rt" style="left:13px;top:196px;font-weight:400;color:#f0f0f0;letter-spacing:0px;font-size:12px">100</div>
<div class="rt" style="left:25.5px;top:249.39999999999998px;font-weight:400;color:#f0f0f0;letter-spacing:0px;font-size:12px">0</div>
<svg style="position:absolute;left:7px;top:270.5px" width="8" height="8" viewBox="0 0 8 8" ><path d="M7.4 0.4V7.4H0.4Z" fill="#9a9aa0"/></svg>
<div class="rt" style="left:18.299999999999955px;top:267.7px;font-weight:700;transform:scaleX(0.93);transform-origin:0 0;color:#fff;letter-spacing:0px;font-size:12px">CPU (% of all</div>
<div style="position:absolute;left:37px;top:284px;width:30px;height:70px;box-sizing:border-box;border:1px solid #555"></div>
<div class="rt" style="left:13px;top:286px;font-weight:400;color:#f0f0f0;letter-spacing:0px;font-size:12px">100</div>
<div class="rt" style="left:25.5px;top:340px;font-weight:400;color:#f0f0f0;letter-spacing:0px;font-size:12px">0</div>
<div style="position:absolute;left:1px;top:375px;width:60px;height:3px;background:#3d3d3d"></div>
<div style="position:absolute;left:5px;top:382px;width:60px;height:19px;box-sizing:border-box;border:1px solid #a4b2aa;border-bottom:0"></div>
<div style="position:absolute;left:1px;top:400px;width:60px;height:2px;background:#a4b2aa"></div>
<div class="rt" style="left:11px;top:385px;font-weight:400;color:#f0f0f0;letter-spacing:0px;font-size:12px">Summary</div>
<div class="rt" style="left:10.200000000000045px;top:408px;font-weight:700;transform:scaleX(0.9);transform-origin:0 0;color:#fff;letter-spacing:0px;font-size:12px">Events</div>
<div style="position:absolute;left:1px;top:425px;width:60px;height:1px;background:#3d3d3d"></div>
<svg style="position:absolute;left:17px;top:436px" width="12" height="7" viewBox="0 0 12 7" ><path d="M0.6 3.3L2.8 1L5 3.3L2.8 5.6ZM5.6 1L8 3.3L5.6 5.6M8.4 1L10.8 3.3L8.4 5.6" fill="none" stroke="#b0b4b8" stroke-width="0.9"/></svg>
<div class="rt" style="left:37.40000000000009px;top:434px;font-weight:400;color:#f0f0f0;letter-spacing:0px;font-size:12px">Show Events</div>
<div style="position:absolute;left:1px;top:454px;width:60px;height:1px;background:#3d3d3d"></div>
<div class="rt" style="left:10.200000000000045px;top:460px;font-weight:700;transform:scaleX(1);transform-origin:0 0;color:#fff;letter-spacing:0px;font-size:12px">Memory Usage</div>
<div style="position:absolute;left:1px;top:477px;width:60px;height:1px;background:#3d3d3d"></div>
<svg style="position:absolute;left:17px;top:487px" width="12" height="10" viewBox="0 0 12 10" ><path d="M0 1.6H2.6L3.6 0.4H7L8 1.6H12V9.4H0Z" fill="#b4bccc"/><circle cx="5.6" cy="5.4" r="2.2" fill="none" stroke="#2a2a2a" stroke-width="1"/><rect x="1.4" y="2.6" width="1.6" height="1" fill="#2a2a2a"/></svg>
<div class="rt" style="left:37.40000000000009px;top:486px;font-weight:400;color:#f0f0f0;letter-spacing:0px;font-size:12px">Take Snapshot</div>
<div style="position:absolute;left:1px;top:506px;width:60px;height:1px;background:#3d3d3d"></div>
<div class="rt" style="left:10px;top:512px;font-weight:700;transform:scaleX(0.9);transform-origin:0 0;color:#fff;letter-spacing:0px;font-size:12px">CPU Usage</div>
<div style="position:absolute;left:1px;top:529px;width:60px;height:1px;background:#3d3d3d"></div>
<div style="position:absolute;left:18.200000000000045px;top:539.2px;width:8.8px;height:8.8px;border-radius:50%;background:#b4bcc4"></div>
<div class="rt" style="left:38px;top:537.7px;font-weight:400;color:#f0f0f0;letter-spacing:0px;font-size:12px">Record CPU Profile</div>
</div>
</body></html>
